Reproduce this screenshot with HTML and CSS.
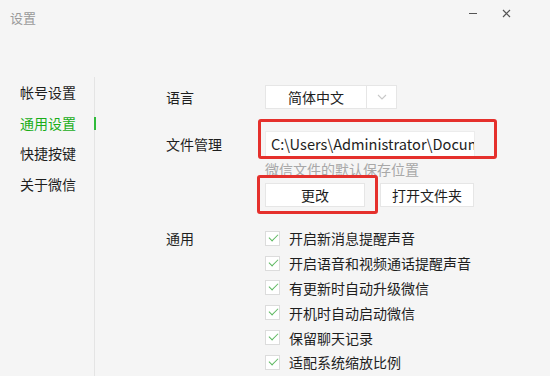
FILE: index.html
```html
<!DOCTYPE html>
<html lang="zh-CN">
<head>
    <meta charset="UTF-8">
    <title>设置</title>
    <link rel="stylesheet" href="styles.css">
</head>
<body>
    <div class="window">
        <div class="titlebar">
            <span class="title">设置</span>
            <span class="ctrl min"></span>
            <span class="ctrl close">
                <svg width="9" height="9" viewBox="0 0 9 9"><path d="M1 1L8 8M8 1L1 8" stroke="#555" stroke-width="1.2"/></svg>
            </span>
        </div>

        <div class="content">
            <ul class="sidebar">
                <li>帐号设置</li>
                <li class="active">通用设置</li>
                <li>快捷按键</li>
                <li>关于微信</li>
            </ul>

            <div class="main">
                <div class="row">
                    <div class="label">语言</div>
                    <div class="select">
                        <span class="select-text">简体中文</span>
                        <span class="select-arrow">
                            <svg width="10" height="6" viewBox="0 0 10 6"><path d="M1 1L5 5L9 1" fill="none" stroke="#c8c8c8" stroke-width="1.1"/></svg>
                        </span>
                    </div>
                </div>

                <div class="row row-file">
                    <div class="label">文件管理</div>
                    <div class="path">C:\Users\Administrator\Documents\WeChat Files</div>
                </div>
                <div class="hint">微信文件的默认保存位置</div>
                <div class="buttons">
                    <button class="btn btn-change">更改</button>
                    <button class="btn btn-open">打开文件夹</button>
                </div>

                <div class="row row-general">
                    <div class="label">通用</div>
                    <ul class="checks">
                        <li><span class="box"></span>开启新消息提醒声音</li>
                        <li><span class="box"></span>开启语音和视频通话提醒声音</li>
                        <li><span class="box"></span>有更新时自动升级微信</li>
                        <li><span class="box"></span>开机时自动启动微信</li>
                        <li><span class="box"></span>保留聊天记录</li>
                        <li><span class="box"></span>适配系统缩放比例</li>
                    </ul>
                </div>
            </div>
        </div>

        <div class="mark mark-path"></div>
        <div class="mark mark-change"></div>
    </div>
</body>
</html>
```

FILE: styles.css
```css
* { box-sizing: border-box; }
body { margin: 0; font-family: "Noto Sans CJK SC", "Noto Sans", sans-serif; font-size: 14px; color: #1e1e1e; }
.window { position: relative; width: 550px; height: 376px; background: #f5f5f5; overflow: hidden; }

.titlebar { display: flex; align-items: center; height: 32px; padding: 0 10px; }
.title { font-size: 13px; color: #9a9a9a; margin-top: 2px; }
.ctrl { display: flex; align-items: center; justify-content: center; height: 20px; }
.min { margin-left: auto; width: 8px; margin-right: 25px; margin-top: -6px; }
.min::before { content: ""; display: block; width: 8px; height: 1px; background: #555; }
.close { width: 9px; margin-right: 29px; margin-top: -5px; }

.content { display: flex; padding-top: 45px; height: 376px; }
.sidebar { list-style: none; margin: 0; padding: 0; width: 95px; border-right: 1px solid #e4e4e4; }
.sidebar li { position: relative; padding-left: 20px; line-height: 30.5px; }
.sidebar li.active { color: #1aad19; }
.sidebar li.active::after { content: ""; position: absolute; right: -2px; top: 9px; width: 2px; height: 13px; background: #2fbb3a; }

.main { padding: 8px 0 0 71px; flex: 1; }
.row { display: flex; align-items: center; }
.label { width: 99px; flex: none; }

.select { display: flex; height: 24px; width: 132px; background: #fff; border: 1px solid #e6e6e6; }
.select-text { width: 101px; text-align: center; line-height: 22px; border-right: 1px solid #e6e6e6; }
.select-arrow { flex: 1; display: flex; align-items: center; justify-content: center; }

.row-file { margin-top: 22px; }
.path { width: 210px; height: 26px; background: #fff; border: 1px solid #ececec; padding-left: 5px; font-size: 14.6px; line-height: 24px; white-space: nowrap; overflow: hidden; }
.hint { margin: 2px 0 0 99px; line-height: 20px; color: #a8a8a8; }

.buttons { display: flex; gap: 15px; margin: 4px 0 0 99px; }
.btn { height: 24px; background: #fff; border: 1px solid #e6e6e6; font-family: inherit; font-size: 14px; color: #1e1e1e; padding: 0; }
.btn-change { width: 100px; }
.btn-open { width: 94px; }

.row-general { align-items: flex-start; margin-top: 19px; }
.row-general .label { line-height: 24.8px; }
.checks { list-style: none; margin: 0; padding: 0; }
.checks li { display: flex; align-items: center; height: 24.8px; }
.box { position: relative; width: 15px; height: 15px; margin-right: 9px; background: #fff; border: 1px solid #dcdcdc; }
.box::after { content: ""; position: absolute; left: 3px; top: 2px; width: 8px; height: 4px; border-left: 1px solid #5cb85f; border-bottom: 1px solid #5cb85f; transform: rotate(-45deg); }

.mark { position: absolute; border: 3px solid #e5302c; border-radius: 3px; }
.mark-path { left: 258px; top: 119px; width: 239px; height: 40px; }
.mark-change { left: 257px; top: 175px; width: 121px; height: 39px; }
```
